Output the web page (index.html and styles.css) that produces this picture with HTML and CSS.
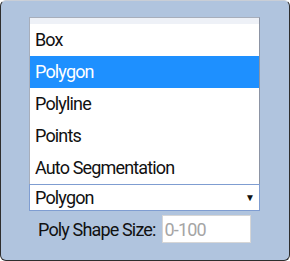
FILE: index.html
```html
<!DOCTYPE html>
<html lang="en">
<head>
  <meta charset="UTF-8">
  <title>Shape Tool</title>
  <link rel="stylesheet" href="styles.css">
</head>
<body>

  <div class="panel">
    <ul class="options">
      <li class="option">Box</li>
      <li class="option selected">Polygon</li>
      <li class="option">Polyline</li>
      <li class="option">Points</li>
      <li class="option">Auto Segmentation</li>
    </ul>
    <div class="select">
      <span>Polygon</span>
      <span class="arrow">&#9660;</span>
    </div>
    <div class="size-row">
      <label for="poly-size">Poly Shape Size:</label>
      <input id="poly-size" type="text" placeholder="0-100">
    </div>
  </div>

</body>
</html>
```

FILE: styles.css
```css
body {
  margin: 0;
  background-color: #ffffff;
  font-family: Roboto, "Liberation Sans", sans-serif;
  font-size: 18px;
  letter-spacing: -0.85px;
  color: #111;
}
.panel {
  box-sizing: border-box;
  width: 290px;
  height: 261px;
  padding: 16px 29px 0 28px;
  background-color: #b0c4de;
  border: 1px solid #2e2e2e;
  border-top-color: #c9ced6;
  border-radius: 6px;
}
.options {
  list-style: none;
  margin: 0;
  padding: 6px 0 0;
  background: linear-gradient(#eef1f7 6px, #ffffff 6px);
  border: 1px solid #a7aebb;
  border-right-color: #8c94a4;
  border-bottom: none;
}
.option {
  height: 32px;
  line-height: 32px;
  padding-left: 5px;
}
.option.selected {
  background-color: #1e90ff;
  color: #fff;
}
.select {
  box-sizing: border-box;
  height: 27px;
  display: flex;
  align-items: center;
  justify-content: space-between;
  padding: 0 4px 0 5px;
  background-color: #fff;
  border: 1px solid #7f9dd1;
}
.arrow {
  font-size: 10px;
  letter-spacing: 0;
  color: #111;
}
.size-row {
  display: flex;
  align-items: center;
  gap: 6px;
  margin-top: 4px;
  padding-left: 9px;
}
.size-row label {
  white-space: nowrap;
}
.size-row input {
  box-sizing: border-box;
  width: 89px;
  height: 28px;
  padding: 0 2px;
  font: inherit;
  letter-spacing: inherit;
  border: 1px solid #d6d6d6;
  outline: none;
}
.size-row input::placeholder {
  color: #a5a5a5;
}
```
